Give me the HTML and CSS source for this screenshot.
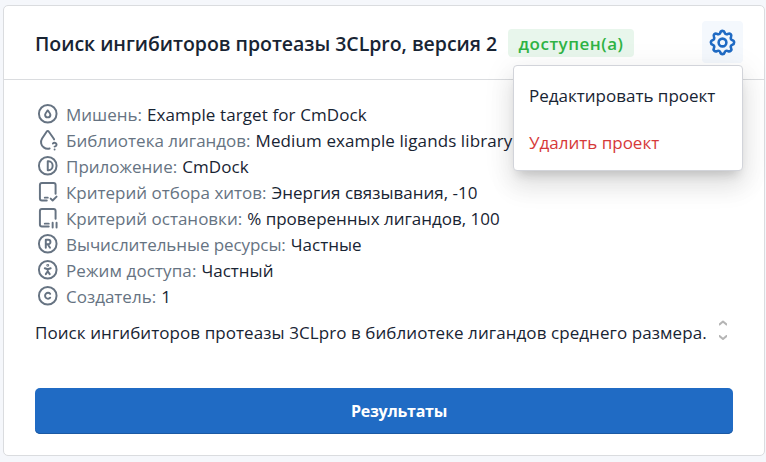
FILE: index.html
```html
<!DOCTYPE html>
<html lang="ru">
<head>
<meta charset="utf-8">
<title>Проект</title>
<link rel="stylesheet" href="styles.css">
</head>
<body>
<main class="card">
  <header class="card-header">
    <h1 class="title">Поиск ингибиторов протеазы 3CLpro, версия 2</h1>
    <span class="badge">доступен(а)</span>
    <div class="settings">
      <button class="settings-button" aria-label="Настройки">
        <svg class="gear" viewBox="0 0 24 24"><path d="M10.325 4.317c.426-1.756 2.924-1.756 3.35 0a1.724 1.724 0 0 0 2.573 1.066c1.543-.94 3.31.826 2.37 2.37a1.724 1.724 0 0 0 1.065 2.572c1.756.426 1.756 2.924 0 3.35a1.724 1.724 0 0 0-1.066 2.573c.94 1.543-.826 3.31-2.37 2.37a1.724 1.724 0 0 0-2.572 1.065c-.426 1.756-2.924 1.756-3.35 0a1.724 1.724 0 0 0-2.573-1.066c-1.543.94-3.31-.826-2.37-2.37a1.724 1.724 0 0 0-1.065-2.572c-1.756-.426-1.756-2.924 0-3.35a1.724 1.724 0 0 0 1.066-2.573c-.94-1.543.826-3.31 2.37-2.37 1 .608 2.296.07 2.572-1.065z"/><circle cx="12" cy="12" r="3"/></svg>
      </button>
      <div class="menu">
        <a class="menu-item edit">Редактировать проект</a>
        <a class="menu-item danger">Удалить проект</a>
      </div>
    </div>
  </header>
  <section class="card-body">
    <ul class="details">
      <li><svg class="icon" viewBox="0 0 24 24"><circle cx="12" cy="12" r="9"/><path d="M12 8.6c-1.1 1.6-2.7 3-2.7 4.4a2.7 2.7 0 0 0 5.4 0c0-1.400-1.600-2.800-2.700-4.400z"/></svg><span class="label">Мишень:</span> <span class="value latin">Example target for CmDock</span></li>
      <li><svg class="icon" viewBox="0 0 24 24"><path d="M18.500 11.600a9 9 0 0 0-.5-.9L13 3.600a1.200 1.200 0 0 0-2 0L6.200 10.700c-1.900 3.100-1.200 7.100 1.700 9.100 1.700 1.300 3.900 1.700 6 1.200M19 22v.01M19 19a2 2 0 1 0-1.700-3.100"/></svg><span class="label">Библиотека лигандов:</span> <span class="value latin">Medium example ligands library</span></li>
      <li><svg class="icon" viewBox="0 0 24 24"><circle cx="12" cy="12" r="9"/><path d="M12 7.500v9h1a4 4.500 0 0 0 0-9z"/></svg><span class="label">Приложение:</span> <span class="value latin">CmDock</span></li>
      <li><svg class="icon" viewBox="0 0 24 24"><path d="M20 14V5a2 2 0 0 0-2-2H6a2 2 0 0 0-2 2v14a2 2 0 0 0 2 2h5M9 18h3M15 19l2 2 4-4"/></svg><span class="label">Критерий отбора хитов:</span> <span class="value">Энергия связывания, -10</span></li>
      <li><svg class="icon" viewBox="0 0 24 24"><path d="M20 13V5a2 2 0 0 0-2-2H6a2 2 0 0 0-2 2v14a2 2 0 0 0 2 2h7M9 18h4M17 17v5M21 17v5"/></svg><span class="label">Критерий остановки:</span> <span class="value">% проверенных лигандов, 100</span></li>
      <li><svg class="icon" viewBox="0 0 24 24"><circle cx="12" cy="12" r="9"/><path d="M10 16V8h2.500a2 2 0 0 1 0 4.500H10m2 0 2.300 3.500"/></svg><span class="label tight">Вычислительные ресурсы:</span> <span class="value">Частные</span></li>
      <li><svg class="icon" viewBox="0 0 24 24"><circle cx="12" cy="12" r="9"/><path d="m10 16.500 2-3 2 3m-2-3v-2m-3-1 3 1 3-1"/><circle cx="12" cy="7.500" r=".5"/></svg><span class="label loose">Режим доступа:</span> <span class="value">Частный</span></li>
      <li><svg class="icon" viewBox="0 0 24 24"><circle cx="12" cy="12" r="9"/><path d="M14.500 14a3 3 0 1 1 0-4"/></svg><span class="label">Создатель:</span> <span class="value">1</span></li>
    </ul>
    <div class="description">
      <p>Поиск ингибиторов протеазы 3CLpro в библиотеке лигандов среднего размера.</p>
      <svg class="spinner" viewBox="0 0 8 20"><path d="M.5 4.500 4 1.500l3.500 3M.5 16 4 19l3.500-3"/></svg>
    </div>
    <button class="results">Результаты</button>
  </section>
</main>
</body>
</html>
```
FILE: styles.css
```css
* { box-sizing: border-box; }
body {
  margin: 0;
  padding: 5px 1px 6px 3px;
  background: #f5f7fb;
  color: #182433;
  font: 17px/26px "Open Sans", "Noto Sans", sans-serif;
}
.card {
  height: 451px;
  width: 762px;
  border: 1px solid #dadcdf;
  border-radius: 5px;
  background: #fff;
}
.card-header {
  display: flex;
  align-items: center;
  height: 74px;
  padding: 0 21px 0 31px;
  border-bottom: 1px solid #dadcdf;
}
.title {
  width: 473px;
  margin: 0;
  padding-top: 2px;
  font-size: 19.5px;
  font-weight: 600;
  letter-spacing: -.03px;
  white-space: nowrap;
}
.badge {
  width: 126px;
  height: 28px;
  border-radius: 4px;
  background: #e8f6ec;
  color: #2fb344;
  font-size: 17px;
  font-weight: 600;
  letter-spacing: .5px;
  line-height: 30px;
  text-align: center;
}
.settings {
  position: relative;
  width: 41px;
  height: 42px;
  margin: -2px 0 0 auto;
}
.settings-button {
  display: flex;
  align-items: center;
  justify-content: center;
  width: 41px;
  height: 42px;
  padding: 1px 0 0;
  border: 0;
  border-radius: 4px;
  background: #f4f8fd;
}
svg {
  fill: none;
  stroke: currentColor;
  stroke-width: 2;
  stroke-linecap: round;
  stroke-linejoin: round;
}
.gear { width: 31px; height: 31px; color: #206bc4; }
.menu {
  position: absolute;
  top: 44px;
  right: 0;
  z-index: 1;
  width: 230px;
  height: 106px;
  padding: 6px 0;
  border: 1px solid #d2d4da;
  border-radius: 4px;
  background: #fff;
  box-shadow: 0 16px 24px 2px rgba(0, 0, 0, .08), 0 6px 30px 5px rgba(0, 0, 0, .06), 0 8px 10px -5px rgba(0, 0, 0, .16);
}
.menu-item {
  display: block;
  height: 47px;
  padding: 0 15px;
  line-height: 47px;
  white-space: nowrap;
}
.danger { color: #d63939; }
.card-body { padding: 22px 29px 0 31px; }
.details { margin: 0; padding: 0; list-style: none; }
.details li { display: flex; height: 26px; white-space: nowrap; }
.icon { flex: none; width: 23.5px; height: 23.5px; margin: 0 6.500px 0 1px; color: #667382; }
.label { margin-right: 5px; color: #667382; }
.tight { letter-spacing: -.08px; }
.loose { letter-spacing: .1px; }
.latin { letter-spacing: .1px; }
.description {
  display: flex;
  justify-content: space-between;
  height: 48px;
  padding: 10px 8px 0 0;
}
.description p { margin: 0; letter-spacing: .07px; white-space: nowrap; }
.spinner { width: 8px; height: 20px; margin-top: 0; color: #b5b5b5; }
.results {
  display: block;
  width: 698px;
  height: 46px;
  margin-top: 30px;
  padding: 0 0 0 30px;
  border: 0;
  border-radius: 5px;
  background: #206bc4;
  box-shadow: inset 0 -1px #1b59a3;
  color: #fff;
  font: 700 16px/46px "Open Sans", sans-serif;
  letter-spacing: -.25px;
}
```
